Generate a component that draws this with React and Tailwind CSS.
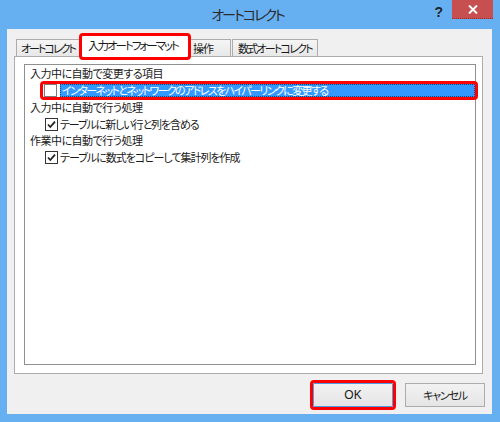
import React from 'react';

const jp = { fontFamily: '"Noto Sans CJK JP", "Noto Sans", sans-serif', fontFeatureSettings: '"palt" 1' };

function CheckBox({ checked, dim }) {
  return (
    <span
      className={`flex h-[13px] w-[13px] shrink-0 items-center justify-center bg-white border ${dim ? 'border-[#7a7a7a]' : 'border-[#333333]'}`}
    >
      {checked && (
        <svg width="11" height="11" viewBox="0 0 11 11">
          <path d="M2 5.5 L4.3 8 L9 2.6" fill="none" stroke="#222" strokeWidth="1.8" />
        </svg>
      )}
    </span>
  );
}

export default function App() {
  return (
    <div className="w-[500px] h-[422px] bg-[#66b0f2] flex flex-col text-[#1a1a1a]" style={jp}>
      {/* Title bar */}
      <div className="h-[29px] flex shrink-0">
        <div className="flex-1" />
        <div className="text-[14px] tracking-[-2px] text-[#2a2a2a] leading-none pt-[7px] pl-[2px]">オートコレクト</div>
        <div className="flex-1 flex justify-end items-start pr-[7px]">
          <span className="text-[14px] font-bold leading-none mt-[5px] mr-[9px] text-[#222]" style={{ fontFamily: '"Liberation Sans", sans-serif' }}>?</span>
          <div className="w-[41px] h-[19px] bg-[#c84f4f] flex items-center justify-center border-b border-dotted border-[#9a3030]">
            <svg width="10" height="9" viewBox="0 0 10 9">
              <path d="M1 0.5 L9 8.5 M9 0.5 L1 8.5" stroke="#fff" strokeWidth="2" />
            </svg>
          </div>
        </div>
      </div>

      {/* Client area */}
      <div className="ml-[7px] mr-[8px] h-[385px] bg-[#f0f0f0] flex flex-col border-t border-[#e8eef5]">
        {/* Tabs */}
        <div className="h-[26px] flex items-end pl-[9px] text-[11px] whitespace-nowrap relative z-10">
          <div className="w-[64px] h-[17px] border border-b-0 border-[#acacac] bg-gradient-to-b from-[#f5f5f5] to-[#e8e8e8] flex items-center pl-[4px] leading-none tracking-[-2px] overflow-hidden">オートコレクト</div>
          <div className="ml-[2px] w-[106px] h-[21px] -mb-[1px] bg-white flex items-center pl-[6px] pb-[1px] leading-none text-[11.5px] tracking-[-2px] outline-3 outline-solid outline-[#ff0000] rounded-[1px] overflow-hidden">入力オートフォーマット</div>
          <div className="ml-[3px] w-[40px] h-[17px] border border-b-0 border-l-0 border-[#acacac] bg-gradient-to-b from-[#f5f5f5] to-[#e8e8e8] flex items-center pl-[2px] leading-none tracking-[-1px] overflow-hidden">操作</div>
          <div className="ml-[1px] w-[86px] h-[17px] border border-b-0 border-[#acacac] bg-gradient-to-b from-[#f5f5f5] to-[#e8e8e8] flex items-center pl-[5px] leading-none tracking-[-1.8px] overflow-hidden">数式オートコレクト</div>
        </div>

        {/* Tab panel */}
        <div className="ml-[7px] w-[469px] h-[318px] bg-white border border-[#acacac] pt-[7px] pl-[9px]">
          <div className="w-[452px] h-[301px] border border-[#8e8f8f] pl-[5px] text-[11px] leading-none whitespace-nowrap">
            <div className="h-[17px] flex items-center tracking-[-0.5px]">入力中に自動で変更する項目</div>
            <div className="h-[17px] flex items-center">
              <div className="ml-[13px] w-[432px] h-[13px] flex items-center outline-3 outline-solid outline-[#ff0000] rounded-[1px]">
                <span className="ml-[1px]">
                  <CheckBox dim />
                </span>
                <div className="ml-[3px] flex-1 h-[13px] bg-[#3399ff] text-white flex items-center pl-[1px] border border-dotted border-[#1d3f6b] tracking-[-1.6px]">
                  インターネットとネットワークのアドレスをハイパーリンクに変更する
                </div>
              </div>
            </div>
            <div className="h-[17px] flex items-center tracking-[-0.5px]">入力中に自動で行う処理</div>
            <div className="h-[16px] flex items-center pl-[15px] gap-[2px]">
              <CheckBox checked />
              <span className="tracking-[-1.1px]">テーブルに新しい行と列を含める</span>
            </div>
            <div className="h-[17px] flex items-center tracking-[-0.5px]">作業中に自動で行う処理</div>
            <div className="h-[16px] flex items-center pl-[15px] gap-[2px]">
              <CheckBox checked />
              <span className="tracking-[-1px]">テーブルに数式をコピーして集計列を作成</span>
            </div>
          </div>
        </div>

        {/* Buttons */}
        <div className="mt-[9px] flex justify-end gap-[12px] pr-[7px] text-[12px]">
          <button className="w-[80px] h-[24px] border border-[#4f9de6] bg-gradient-to-b from-[#f2f2f2] to-[#e5e5e5] outline-3 outline-solid outline-[#ff0000] rounded-[1px] leading-none" style={{ fontFamily: '"Liberation Sans", sans-serif' }}>
            OK
          </button>
          <button className="w-[80px] h-[24px] border border-[#acacac] bg-gradient-to-b from-[#f2f2f2] to-[#e5e5e5] leading-none text-[11px] tracking-[-1.2px]">
            キャンセル
          </button>
        </div>
      </div>
    </div>
  );
}
